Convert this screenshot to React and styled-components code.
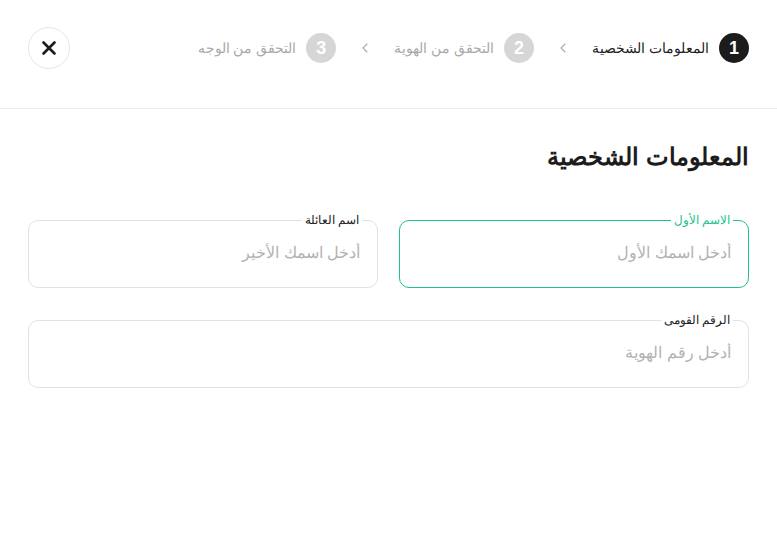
import React from "react";
import styled, { createGlobalStyle } from "styled-components";

const Global = createGlobalStyle`
  html, body { margin: 0; padding: 0; background: #fff; }
  body { font-family: "Liberation Sans", Arial, sans-serif; }
  * { box-sizing: border-box; }
`;

const Page = styled.div`
  direction: rtl;
  width: 777px;
  min-height: 542px;
  background: #fff;
  font-family: "Liberation Sans", Arial, sans-serif;
`;

const Header = styled.header`
  display: flex;
  align-items: center;
  justify-content: space-between;
  padding: 27px 28px 39px;
  border-bottom: 1px solid #ececec;
`;

const Steps = styled.div`
  display: flex;
  align-items: center;
`;

const Step = styled.div`
  display: flex;
  align-items: center;
  gap: 10px;
`;

const Num = styled.span`
  width: 30px;
  height: 30px;
  border-radius: 50%;
  display: flex;
  align-items: center;
  justify-content: center;
  background: ${(p) => (p.$active ? "#1c1c1c" : "#d6d6d6")};
  color: #fff;
  font-weight: 700;
  font-size: 18px;
`;

const StepLabel = styled.span`
  font-size: 14px;
  color: ${(p) => (p.$active ? "#222" : "#a9a9a9")};
`;

const Chevron = styled.span`
  display: flex;
  margin: 0 21px;
  color: #ababab;
`;

const Close = styled.button`
  width: 42px;
  height: 42px;
  border-radius: 50%;
  border: 1.5px solid #e6e6e6;
  background: #fff;
  display: flex;
  align-items: center;
  justify-content: center;
  padding: 0;
  cursor: pointer;
`;

const Main = styled.main`
  padding: 33px 28px 0;
`;

const Title = styled.h1`
  margin: 0 0 41px;
  font-size: 24px;
  line-height: 30px;
  font-weight: 700;
  color: #1c1c1c;
`;

const Row = styled.div`
  display: grid;
  grid-template-columns: ${(p) => (p.$cols === 2 ? "1fr 1fr" : "1fr")};
  gap: 21px;
  margin-bottom: 25px;
`;

const Field = styled.fieldset`
  margin: 0;
  padding: 0 15px 8px;
  border: 1px solid ${(p) => (p.$focus ? "#1ec28b" : "#e2e2e2")};
  border-radius: 10px;
  min-width: 0;
`;

const Legend = styled.legend`
  padding: 0 3px;
  font-size: 12px;
  line-height: 14px;
  color: ${(p) => (p.$focus ? "#1ec28b" : "#222")};
`;

const Input = styled.input`
  display: block;
  width: 100%;
  height: 52px;
  border: none;
  outline: none;
  background: transparent;
  padding: 0 2px;
  font-family: "Liberation Sans", Arial, sans-serif;
  font-size: 16px;
  color: #222;
  caret-color: #111;
  &::placeholder { color: #b3b3b3; }
`;

const steps = [
  { n: 1, label: "المعلومات الشخصية", active: true },
  { n: 2, label: "التحقق من الهوية" },
  { n: 3, label: "التحقق من الوجه" },
];

export default function App() {
  return (
    <Page>
      <Global />
      <Header>
        <Steps>
          {steps.map((s, i) => (
            <React.Fragment key={s.n}>
              {i > 0 && (
                <Chevron>
                  <svg width="16" height="16" viewBox="0 0 24 24" fill="none" stroke="currentColor" strokeWidth="1.6" strokeLinecap="round" strokeLinejoin="round">
                    <path d="M15 18l-6-6 6-6" />
                  </svg>
                </Chevron>
              )}
              <Step>
                <Num $active={s.active}>{s.n}</Num>
                <StepLabel $active={s.active}>{s.label}</StepLabel>
              </Step>
            </React.Fragment>
          ))}
        </Steps>
        <Close aria-label="close">
          <svg width="16" height="16" viewBox="0 0 16 16" fill="none" stroke="#1c1c1c" strokeWidth="2.6" strokeLinecap="round">
            <path d="M2.5 2.5l11 11M13.5 2.5l-11 11" />
          </svg>
        </Close>
      </Header>
      <Main>
        <Title>المعلومات الشخصية</Title>
        <Row $cols={2}>
          <Field $focus>
            <Legend $focus>الاسم الأول</Legend>
            <Input placeholder="أدخل اسمك الأول" autoFocus />
          </Field>
          <Field>
            <Legend>اسم العائلة</Legend>
            <Input placeholder="أدخل اسمك الأخير" />
          </Field>
        </Row>
        <Row>
          <Field>
            <Legend>الرقم القومى</Legend>
            <Input placeholder="أدخل رقم الهوية" />
          </Field>
        </Row>
      </Main>
    </Page>
  );
}
